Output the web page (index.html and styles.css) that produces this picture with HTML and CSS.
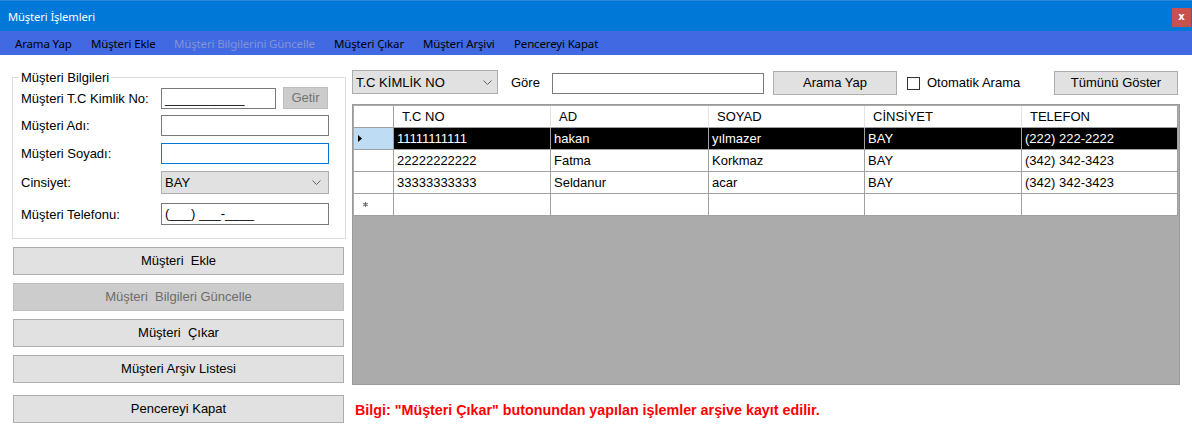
FILE: index.html
```html
<!DOCTYPE html>
<html lang="tr">
<head>
<meta charset="utf-8">
<title>Müşteri İşlemleri</title>
<link rel="stylesheet" href="styles.css">
</head>
<body>
<div class="window">
  <header class="titlebar">
    <span class="title">Müşteri İşlemleri</span>
    <span class="close">x</span>
  </header>
  <nav class="menubar">
    <span class="mi m1">Arama Yap</span>
    <span class="mi m2">Müşteri Ekle</span>
    <span class="mi m3 disabled">Müşteri Bilgilerini Güncelle</span>
    <span class="mi m4">Müşteri Çıkar</span>
    <span class="mi m5">Müşteri Arşivi</span>
    <span class="mi m6">Pencereyi Kapat</span>
  </nav>
  <main class="content">
    <section class="left">
      <fieldset class="group">
        <legend>Müşteri Bilgileri</legend>
        <div class="row r1">
          <span class="lbl">Müşteri T.C Kimlik No:</span>
          <div class="field tc">___________</div>
          <div class="getir">Getir</div>
        </div>
        <div class="row r2">
          <span class="lbl">Müşteri Adı:</span>
          <div class="field wide"></div>
        </div>
        <div class="row r3">
          <span class="lbl">Müşteri Soyadı:</span>
          <div class="field wide focus"></div>
        </div>
        <div class="row r4">
          <span class="lbl">Cinsiyet:</span>
          <div class="combo wide"><span>BAY</span><svg class="chev" width="9" height="5" viewBox="0 0 9 5"><polyline points="0.5,0.5 4.5,4.5 8.5,0.5" fill="none" stroke="#606060" stroke-width="1"/></svg></div>
        </div>
        <div class="row r5">
          <span class="lbl">Müşteri Telefonu:</span>
          <div class="field wide">(___) ___-____</div>
        </div>
      </fieldset>
      <div class="btn b1">Müşteri&nbsp; Ekle</div>
      <div class="btn b2 off">Müşteri&nbsp; Bilgileri Güncelle</div>
      <div class="btn b3">Müşteri&nbsp; Çıkar</div>
      <div class="btn b4">Müşteri Arşiv Listesi</div>
      <div class="btn b5">Pencereyi Kapat</div>
    </section>
    <section class="right">
      <div class="toolbar">
        <div class="combo tcombo"><span>T.C KİMLİK NO</span><svg class="chev" width="9" height="5" viewBox="0 0 9 5"><polyline points="0.5,0.5 4.5,4.5 8.5,0.5" fill="none" stroke="#606060" stroke-width="1"/></svg></div>
        <span class="gore">Göre</span>
        <div class="field search"></div>
        <div class="tbtn ara">Arama Yap</div>
        <span class="check"></span>
        <span class="checklbl">Otomatik Arama</span>
        <div class="tbtn tumu">Tümünü Göster</div>
      </div>
      <div class="grid">
        <div class="grow head">
          <div class="rh"></div>
          <div class="hc">T.C NO</div>
          <div class="hc">AD</div>
          <div class="hc">SOYAD</div>
          <div class="hc">CİNSİYET</div>
          <div class="hc">TELEFON</div>
        </div>
        <div class="grow sel">
          <div class="rh"><svg width="4" height="7" viewBox="0 0 4 7"><polygon points="0,0 4,3.5 0,7" fill="#000"/></svg></div>
          <div class="c">11111111111</div>
          <div class="c">hakan</div>
          <div class="c">yılmazer</div>
          <div class="c">BAY</div>
          <div class="c">(222) 222-2222</div>
        </div>
        <div class="grow">
          <div class="rh"></div>
          <div class="c">22222222222</div>
          <div class="c">Fatma</div>
          <div class="c">Korkmaz</div>
          <div class="c">BAY</div>
          <div class="c">(342) 342-3423</div>
        </div>
        <div class="grow">
          <div class="rh"></div>
          <div class="c">33333333333</div>
          <div class="c">Seldanur</div>
          <div class="c">acar</div>
          <div class="c">BAY</div>
          <div class="c">(342) 342-3423</div>
        </div>
        <div class="grow">
          <div class="rh star"><svg width="5" height="5" viewBox="0 0 5 5"><path d="M2.5 0V5M0.3 1.2L4.7 3.8M0.3 3.8L4.7 1.2" stroke="#6a6a6a" stroke-width="1.1"/></svg></div>
          <div class="c"></div>
          <div class="c"></div>
          <div class="c"></div>
          <div class="c"></div>
          <div class="c"></div>
        </div>
      </div>
      <p class="info">Bilgi: "Müşteri Çıkar" butonundan yapılan işlemler arşive kayıt edilir.</p>
    </section>
  </main>
</div>
</body>
</html>
```

FILE: styles.css
```css
* { box-sizing: border-box; }
html, body { margin: 0; padding: 0; }
body {
  width: 1192px;
  height: 430px;
  overflow: hidden;
  background: #ffffff;
  font-family: "Liberation Sans", Arial, sans-serif;
  font-size: 13px;
  color: #000;
}
.window { width: 1192px; height: 430px; display: flex; flex-direction: column; }

.titlebar {
  height: 31px;
  flex: none;
  background: #0078d7;
  border-top: 1px solid #2a87d9;
  display: flex;
  align-items: center;
  padding-left: 8px;
  padding-right: 1px;
  font-family: "Noto Sans", "Open Sans", sans-serif;
  font-size: 11.2px;
  color: #fff;
}
.title { flex: 1; letter-spacing: -0.1px; margin-top: 1px; }
.close {
  width: 19px;
  height: 19px;
  background: #c75050;
  color: #fff;
  font-family: "DejaVu Sans", sans-serif;
  font-weight: bold;
  font-size: 10px;
  line-height: 17px;
  text-align: center;
  margin-top: 3px;
}

.menubar {
  height: 24px;
  flex: none;
  background: #4169e1;
  display: flex;
  align-items: center;
  padding-left: 15px;
  font-family: "Noto Sans", "Open Sans", sans-serif;
  font-size: 11.5px;
  color: #000;
}
.mi { flex: none; white-space: nowrap; letter-spacing: -0.15px; }
.m1 { width: 76px; }
.m2 { width: 83px; }
.m3 { width: 160px; }
.m4 { width: 89px; }
.m5 { width: 91px; }
.m6 { width: 100px; }
.mi.disabled { color: #8592d6; }

.content {
  flex: 1;
  display: flex;
  padding-top: 15px;
  padding-left: 12px;
  gap: 6px;
}

.left { width: 334px; flex: none; display: flex; flex-direction: column; }

.group {
  margin: 0;
  border: 1px solid #dcdcdc;
  padding: 0 8px 13px 8px;
  min-width: 0;
}
.group legend {
  padding: 0 2px;
  margin-left: -2px;
  line-height: 15px;
  font-size: 13px;
}
.row { display: flex; align-items: center; }
.r1 { height: 22px; margin-top: 2px; }
.r2 { height: 21px; margin-top: 6px; }
.r3 { height: 21px; margin-top: 7px; }
.r4 { height: 23px; margin-top: 7px; }
.r5 { height: 22px; margin-top: 9px; }
.lbl { width: 140px; flex: none; white-space: nowrap; }

.field {
  height: 21px;
  border: 1px solid #7a7a7a;
  background: #fff;
  padding-left: 3px;
  line-height: 19px;
  white-space: nowrap;
  overflow: hidden;
}
.r5 .field { height: 22px; line-height: 20px; }
.field.tc { width: 115px; }
.field.wide { width: 168px; }
.field.focus { border-color: #0078d7; }
.getir {
  width: 45px;
  height: 22px;
  margin-left: 7px;
  background: #cccccc;
  border: 1px solid #bfbfbf;
  color: #747474;
  text-align: center;
  line-height: 20px;
}

.combo {
  height: 23px;
  background: #e1e1e1;
  border: 1px solid #adadad;
  display: flex;
  align-items: center;
  justify-content: space-between;
  padding: 0 7px 0 3px;
}
.combo.wide { width: 168px; }
.chev { flex: none; }

.btn {
  width: 331px;
  height: 28px;
  margin-left: 1px;
  background: #e1e1e1;
  border: 1px solid #adadad;
  text-align: center;
  line-height: 26px;
  white-space: nowrap;
}
.btn.off { background: #cccccc; border-color: #bfbfbf; color: #6d6d6d; }
.b1 { margin-top: 8px; }
.b2, .b3, .b4 { margin-top: 8px; }
.b5 { margin-top: 12px; }

.right { width: 828px; flex: none; display: flex; flex-direction: column; }

.toolbar {
  height: 25px;
  display: flex;
  align-items: center;
}
.tcombo { width: 146px; height: 24px; margin-top: -1px; padding-right: 5px; }
.gore { margin-left: 13px; width: 29px; }
.field.search { width: 212px; height: 21px; margin-left: 12px; margin-top: 1px; }
.tbtn {
  width: 124px;
  height: 24px;
  background: #e1e1e1;
  border: 1px solid #adadad;
  text-align: center;
  line-height: 22px;
  margin-top: 1px;
  white-space: nowrap;
}
.ara { margin-left: 9px; }
.check {
  width: 13px;
  height: 13px;
  border: 1px solid #333;
  background: #fff;
  margin-left: 10px;
  margin-top: 1px;
}
.checklbl { margin-left: 7px; white-space: nowrap; }
.tumu { margin-left: auto; margin-right: 2px; }

.grid {
  margin-top: 9px;
  height: 281px;
  border: 1px solid #9a9a9a;
  padding: 1px;
  background: #ababab;
}
.grow {
  display: grid;
  grid-template-columns: 40px 157px 158px 156px 157px 156px;
  height: 22px;
  width: 824px;
}
.grow > div {
  border-right: 1px solid #a0a0a0;
  border-bottom: 1px solid #a0a0a0;
  background: #fff;
  line-height: 21px;
  white-space: nowrap;
  overflow: hidden;
}
.c { padding-left: 3px; }
.head .hc { padding-left: 8px; border-right-color: #e3e3e3; }
.head .hc:last-child { border-right-color: #a0a0a0; }
.rh { display: flex; align-items: center; padding-left: 4px; }
.sel .rh { background: #bfdcf5; }
.sel .c { background: #000; color: #fff; }
.star { padding-left: 9px; }

.info {
  margin: 17px 0 0 3px;
  color: #ff0000;
  font-weight: bold;
  font-size: 14.3px;
  line-height: 16px;
  white-space: nowrap;
}
```
